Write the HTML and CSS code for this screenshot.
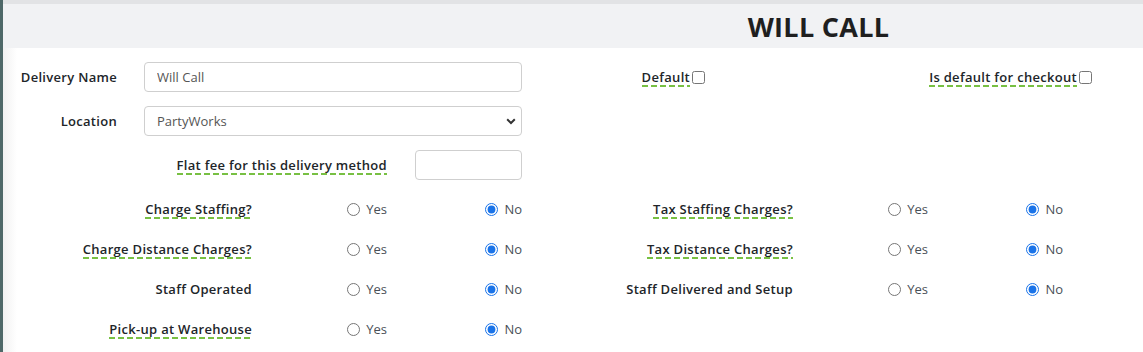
FILE: index.html
```html
<!DOCTYPE html>
<html lang="en">
<head>
  <meta charset="UTF-8">
  <meta name="viewport" content="width=device-width, initial-scale=1.0">
  <title>Will Call</title>
  <link rel="stylesheet" href="styles.css">
</head>
<body>
  <div class="page">
    <div class="header">
      <div class="title">WILL CALL</div>
    </div>

    <div class="form">
      <div class="row">
        <div class="half field">
          <label class="label name-label">Delivery Name</label>
          <input class="text-input wide" type="text" value="Will Call">
        </div>
        <div class="half checks">
          <label class="check-item"><span class="hint">Default</span><input type="checkbox"></label>
          <label class="check-item"><span class="hint">Is default for checkout</span><input type="checkbox"></label>
        </div>
      </div>

      <div class="row">
        <div class="half field">
          <label class="label name-label">Location</label>
          <div class="select-wrap">
            <select class="text-input wide select">
              <option>PartyWorks</option>
            </select>
            <svg class="chevron" width="10" height="7" viewBox="0 0 10 7"><path d="M1.2 1.3 L5 5 L8.8 1.3" fill="none" stroke="#333" stroke-width="2"/></svg>
          </div>
        </div>
      </div>

      <div class="row">
        <div class="half field">
          <label class="label fee-label"><span class="hint">Flat fee for this delivery method</span></label>
          <input class="text-input small" type="text">
        </div>
      </div>

      <div class="radio-grid">
        <div class="label"><span class="hint">Charge Staffing?</span></div>
        <label class="opt"><input type="radio" name="cs"> Yes</label>
        <label class="opt"><input type="radio" name="cs" checked> No</label>
        <div class="spacer"></div>
        <div class="label"><span class="hint">Tax Staffing Charges?</span></div>
        <label class="opt"><input type="radio" name="ts"> Yes</label>
        <label class="opt"><input type="radio" name="ts" checked> No</label>

        <div class="label"><span class="hint">Charge Distance Charges?</span></div>
        <label class="opt"><input type="radio" name="cd"> Yes</label>
        <label class="opt"><input type="radio" name="cd" checked> No</label>
        <div class="spacer"></div>
        <div class="label"><span class="hint">Tax Distance Charges?</span></div>
        <label class="opt"><input type="radio" name="td"> Yes</label>
        <label class="opt"><input type="radio" name="td" checked> No</label>

        <div class="label">Staff Operated</div>
        <label class="opt"><input type="radio" name="so"> Yes</label>
        <label class="opt"><input type="radio" name="so" checked> No</label>
        <div class="spacer"></div>
        <div class="label">Staff Delivered and Setup</div>
        <label class="opt"><input type="radio" name="sd"> Yes</label>
        <label class="opt"><input type="radio" name="sd" checked> No</label>

        <div class="label"><span class="hint">Pick-up at Warehouse</span></div>
        <label class="opt"><input type="radio" name="pw"> Yes</label>
        <label class="opt"><input type="radio" name="pw" checked> No</label>
      </div>
    </div>
  </div>
</body>
</html>
```

FILE: styles.css
```css
body {
  margin: 0;
  font-family: "Open Sans", Arial, sans-serif;
  font-size: 13px;
  color: #212529;
  background-color: #fff;
}

.page {
  min-height: 352px;
  border-left: 3px solid #4e6868;
  background: linear-gradient(to right, #f1f1f1, #fff 14px);
}

.header {
  height: 44px;
  border-top: 4px solid #e2e3e5;
  background-color: #f1f2f4;
  display: flex;
  align-items: center;
  justify-content: center;
  padding-left: 491px;
}

.title {
  font-size: 27px;
  font-weight: 700;
  color: #1f1f1f;
  letter-spacing: 0.3px;
}

.form {
  padding-top: 14px;
}

.row {
  display: flex;
  height: 30px;
  margin-bottom: 14px;
}

.half {
  width: 538px;
  display: flex;
  align-items: center;
}

.label {
  font-weight: 600;
  text-align: right;
  color: #212529;
  letter-spacing: 0.3px;
}

.name-label {
  width: 114px;
  margin-right: 27px;
}

.fee-label {
  width: 384px;
  margin-right: 28px;
}

.hint {
  padding-bottom: 1px;
  background: repeating-linear-gradient(to right, #78c043 0 6px, transparent 6px 9px) left bottom / 100% 2px no-repeat;
}

.text-input {
  height: 30px;
  box-sizing: border-box;
  border: 1px solid #cfcfcf;
  border-radius: 4px;
  padding: 0 12px;
  font-family: inherit;
  font-size: 13px;
  color: #555;
  background: #fff;
}

.wide {
  width: 378px;
}

.small {
  width: 107px;
}

.select-wrap {
  position: relative;
}

.select {
  appearance: none;
  display: block;
}

.chevron {
  position: absolute;
  right: 6px;
  top: 12px;
}

.checks {
  display: grid;
  grid-template-columns: 164px 387px;
  justify-items: end;
}

.check-item {
  font-weight: 600;
  letter-spacing: 0.3px;
  display: flex;
  align-items: center;
}

.check-item input {
  margin: 0 0 0 2px;
  width: 13px;
  height: 13px;
}

.radio-grid {
  display: grid;
  grid-template-columns: 249px 135px 135px 19px 252px 135px 135px;
  grid-auto-rows: 30px;
  row-gap: 10px;
  align-items: center;
  margin-top: 1px;
}

.opt {
  text-align: right;
  color: #495057;
  display: flex;
  justify-content: flex-end;
  align-items: center;
}

.opt input {
  margin: 0 6px 0 0;
  width: 13px;
  height: 13px;
  accent-color: #1a73e8;
}
```
